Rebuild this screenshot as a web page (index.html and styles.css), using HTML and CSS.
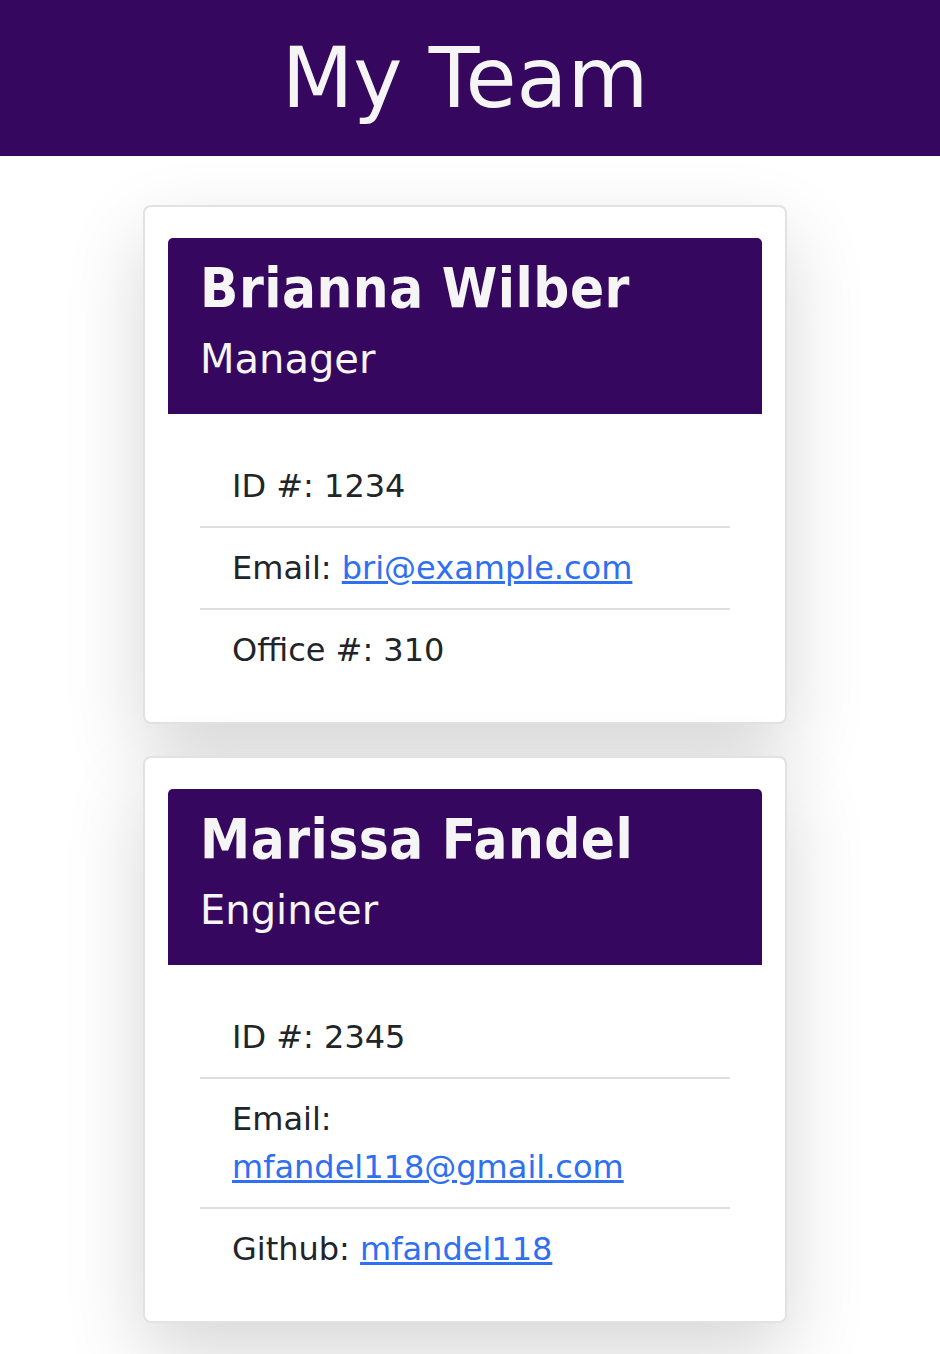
FILE: index.html
```html
<!DOCTYPE html>
<html lang="en">
<head>
<meta charset="utf-8">
<title>My Team</title>
<link rel="stylesheet" href="styles.css">
</head>
<body>
<header class="banner">
  <h1 class="banner-title">My Team</h1>
</header>
<main class="team">
  <section class="card">
    <div class="card-head">
      <h3 class="card-name">Brianna Wilber</h3>
      <h5 class="card-role">Manager</h5>
    </div>
    <ul class="info-list">
      <li class="info-item">ID #: 1234</li>
      <li class="info-item">Email: <a href="mailto:bri@example.com">bri@example.com</a></li>
      <li class="info-item">Office #: 310</li>
    </ul>
  </section>
  <section class="card">
    <div class="card-head">
      <h3 class="card-name">Marissa Fandel</h3>
      <h5 class="card-role">Engineer</h5>
    </div>
    <ul class="info-list">
      <li class="info-item">ID #: 2345</li>
      <li class="info-item">Email: <a href="mailto:mfandel118@gmail.com">mfandel118@gmail.com</a></li>
      <li class="info-item">Github: <a href="https://github.com/mfandel118">mfandel118</a></li>
    </ul>
  </section>
</main>
</body>
</html>
```
FILE: styles.css
```css
* { box-sizing: border-box; }
html, body { margin: 0; padding: 0; background: #fff; }
body {
  font-family: "DejaVu Sans", Verdana, sans-serif;
  color: #212529;
  font-size: 32px;
  line-height: 1.5;
}
.banner {
  background: #36075f;
  height: 156px;
  padding-right: 10px;
  display: flex;
  align-items: center;
  justify-content: center;
}
.banner-title {
  margin: 0;
  color: #f5f5f5;
  font-weight: 400;
  font-size: 83px;
  line-height: 1;
}
.team {
  display: flex;
  flex-direction: column;
  align-items: center;
  gap: 32px;
  padding: 49px 10px 40px 0;
}
.card {
  width: 644px;
  background: #fff;
  border: 2px solid #e2e2e2;
  border-radius: 8px;
  box-shadow: 0 32px 80px rgba(0, 0, 0, 0.16);
  padding: 31px 23px 0;
}
.card-head {
  background: #36075f;
  color: #f5f5f5;
  border-radius: 5px 5px 0 0;
  padding: 16px 32px 31px;
}
.card-name {
  margin: 0 0 14px;
  font-family: "DejaVu Sans Condensed", "DejaVu Sans", sans-serif;
  font-size: 56px;
  font-weight: 700;
  line-height: 1.2;
  letter-spacing: 0.5px;
}
.card-role {
  margin: 0;
  font-size: 40px;
  font-weight: 400;
  line-height: 1.2;
}
.info-list {
  list-style: none;
  margin: 0;
  padding: 32px 32px 32px;
}
.info-item {
  padding: 16px 32px;
  border-bottom: 2px solid #dedede;
}
.info-item:last-child { border-bottom: 0; }
.info-item a { color: #2f6ff2; }
```
